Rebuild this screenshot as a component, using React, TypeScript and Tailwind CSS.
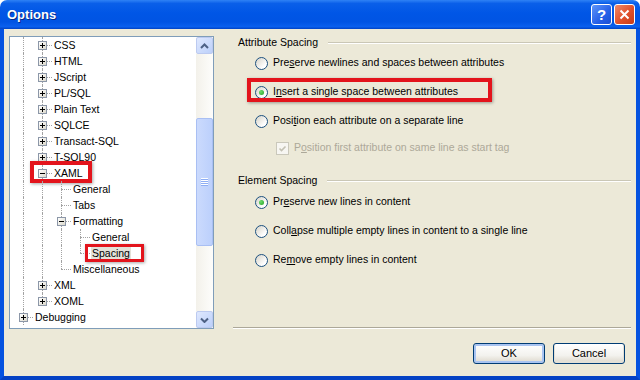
import React from 'react';

type TreeNode = {
  label: string;
  level: number;
  box?: '+' | '-';
  last?: boolean;
  mark?: 'xaml' | 'spacing';
};

const nodes: TreeNode[] = [
  { label: 'CSS', level: 1, box: '+' },
  { label: 'HTML', level: 1, box: '+' },
  { label: 'JScript', level: 1, box: '+' },
  { label: 'PL/SQL', level: 1, box: '+' },
  { label: 'Plain Text', level: 1, box: '+' },
  { label: 'SQLCE', level: 1, box: '+' },
  { label: 'Transact-SQL', level: 1, box: '+' },
  { label: 'T-SQL90', level: 1, box: '+' },
  { label: 'XAML', level: 1, box: '-', mark: 'xaml' },
  { label: 'General', level: 2 },
  { label: 'Tabs', level: 2 },
  { label: 'Formatting', level: 2, box: '-' },
  { label: 'General', level: 3 },
  { label: 'Spacing', level: 3, last: true, mark: 'spacing' },
  { label: 'Miscellaneous', level: 2, last: true },
  { label: 'XML', level: 1, box: '+' },
  { label: 'XOML', level: 1, box: '+', last: true },
  { label: 'Debugging', level: 0, box: '+' },
];

const dots = 'border-dotted border-[#a3a3a3]';

const ExpandBox = ({ sign }: { sign: '+' | '-' }) => (
  <div className="absolute left-[5px] top-[4px] flex h-[9px] w-[9px] items-center justify-center border border-[#8c97a8] bg-[linear-gradient(135deg,#ffffff,#dcd9cc)]">
    <svg width="7" height="7" viewBox="0 0 7 7" shapeRendering="crispEdges">
      <path d="M1 3.5h5" stroke="#000" strokeWidth="1" />
      {sign === '+' && <path d="M3.5 1v5" stroke="#000" strokeWidth="1" />}
    </svg>
  </div>
);

const TreeRow = ({ node }: { node: TreeNode }) => (
  <div className="relative flex h-[16px] items-center">
    {Array.from({ length: node.level }).map((_, i) => (
      <div key={i} className="relative h-full w-[19px] shrink-0">
        <div className={`absolute left-[9px] top-0 h-full border-l ${dots}`} />
      </div>
    ))}
    <div className="relative h-full w-[19px] shrink-0">
      <div className={`absolute left-[9px] top-0 h-[8px] border-l ${dots}`} />
      {!node.last && <div className={`absolute left-[9px] top-[8px] h-[8px] border-l ${dots}`} />}
      <div className={`absolute left-[9px] top-[8px] w-[10px] border-t ${dots}`} />
      {node.box && <ExpandBox sign={node.box} />}
    </div>
    <span
      className={`ml-[1px] whitespace-nowrap px-[1px] leading-[14px] ${
        node.mark === 'spacing' ? 'bg-[#e3e1d8]' : ''
      }`}
    >
      {node.label}
    </span>
    {node.mark === 'xaml' && (
      <div className="absolute left-[16px] top-[-4px] h-[22px] w-[62px] border-4 border-[#e3141c] shadow-[1px_1px_3px_rgba(0,0,0,0.35)]" />
    )}
    {node.mark === 'spacing' && (
      <div className="absolute left-[71px] top-[-1px] h-[18px] w-[59px] border-[3px] border-[#e3141c] shadow-[1px_1px_3px_rgba(0,0,0,0.35)]" />
    )}
  </div>
);

const Chevron = ({ down }: { down?: boolean }) => (
  <svg width="9" height="6" viewBox="0 0 9 6">
    <polyline
      points={down ? '1,1.5 4.5,5 8,1.5' : '1,5 4.5,1.5 8,5'}
      fill="none"
      stroke="#4d6185"
      strokeWidth="2"
    />
  </svg>
);

const ScrollButton = ({ down }: { down?: boolean }) => (
  <div className="flex h-[17px] w-[17px] items-center justify-center rounded-[2px] border border-[#bccaf0] bg-[linear-gradient(135deg,#dfe8fe,#bcd0fa)]">
    <Chevron down={down} />
  </div>
);

const Scrollbar = () => (
  <div className="flex w-[17px] shrink-0 flex-col bg-[#f7f6f1]">
    <ScrollButton />
    <div className="flex-1 bg-[linear-gradient(90deg,#f3f1ea,#fdfdfb)]">
      <div className="mt-[64px] flex h-[128px] items-center justify-center rounded-[2px] border border-[#a9bff3] bg-[linear-gradient(90deg,#cbdafd,#bcd0fc)]">
        <div className="flex flex-col">
          {[0, 1, 2, 3].map((i) => (
            <div key={i} className="h-[2px] w-[7px] border-t border-white border-b border-b-[#8eaef4]" />
          ))}
        </div>
      </div>
    </div>
    <ScrollButton down />
  </div>
);

const Radio = ({ checked }: { checked?: boolean }) => (
  <span className="flex h-[13px] w-[13px] shrink-0 items-center justify-center rounded-full border border-[#1c5180] bg-[linear-gradient(135deg,#d6d3c8,#ffffff_75%)]">
    {checked && <span className="h-[5px] w-[5px] rounded-full bg-[radial-gradient(circle_at_35%_35%,#6fdc6f,#21a121)]" />}
  </span>
);

const RadioRow = ({ checked, children, className = '' }: { checked?: boolean; children: React.ReactNode; className?: string }) => (
  <div className={`flex h-[16px] items-center pl-[22px] ${className}`}>
    <Radio checked={checked} />
    <span className="ml-[5px] whitespace-nowrap">{children}</span>
  </div>
);

const GroupHeader = ({ children, className = '' }: { children: React.ReactNode; className?: string }) => (
  <div className={`flex h-[14px] items-center ${className}`}>
    <span className="ml-[5px] whitespace-nowrap">{children}</span>
    <div className="ml-[10px] h-[2px] flex-1 border-t border-[#cac7b6] border-b border-b-white" />
  </div>
);

const DialogButton = ({ label, isDefault }: { label: string; isDefault?: boolean }) => (
  <button
    className={`flex h-[21px] w-[72px] items-center justify-center rounded-[3px] border border-[#003c74] bg-[linear-gradient(180deg,#ffffff,#f3f2ee_60%,#dcd7cb)] text-[11px] ${
      isDefault ? 'shadow-[inset_0_0_0_2px_#a9c4f1]' : 'shadow-[inset_0_-1px_0_1px_#e3e0d6]'
    }`}
  >
    {label}
  </button>
);

const TitleBar = () => (
  <div className="flex h-[29px] shrink-0 items-center rounded-t-[7px] bg-[linear-gradient(180deg,#2f82f5_0%,#0a5fe9_12%,#0056e6_45%,#0054e3_75%,#0a60ee_92%,#0042c4_100%)] pl-[7px] pr-[5px]">
    <span className="font-['Liberation_Sans',Arial,sans-serif] text-[13px] font-bold text-white [text-shadow:1px_1px_#0b2a84]">
      Options
    </span>
    <div className="ml-auto flex gap-[2px]">
      <div className="flex h-[21px] w-[21px] items-center justify-center rounded-[3px] border border-white bg-[linear-gradient(135deg,#5e95f9,#2560e8_60%,#1a4fd3)]">
        <span className="text-[15px] font-bold leading-none text-white">?</span>
      </div>
      <div className="flex h-[21px] w-[21px] items-center justify-center rounded-[3px] border border-white bg-[linear-gradient(135deg,#f08a6a,#e0502b_55%,#c63c18)]">
        <svg width="11" height="11" viewBox="0 0 11 11">
          <path d="M1.5 1.5l8 8M9.5 1.5l-8 8" stroke="#fff" strokeWidth="2" />
        </svg>
      </div>
    </div>
  </div>
);

export default function App() {
  return (
    <div className="flex h-[380px] w-[640px] flex-col overflow-hidden bg-white font-['Liberation_Sans',Arial,sans-serif] text-[10.5px] text-black">
      <TitleBar />
      <div className="flex min-h-0 flex-1 border-x-4 border-b-4 border-x-[#0552e0] border-b-[#0441c4] bg-[#ece9d8]">
        {/* tree */}
        <div className="ml-[5px] mt-[7px] flex h-[293px] w-[205px] shrink-0 border border-[#7f9db9] bg-white">
          <div className="min-w-0 flex-1 overflow-hidden pl-[4px]">
            {nodes.map((n, i) => (
              <TreeRow key={i} node={n} />
            ))}
          </div>
          <Scrollbar />
        </div>

        {/* settings */}
        <div className="ml-[19px] mr-[5px] flex min-w-0 flex-1 flex-col">
          <GroupHeader className="mt-[7px]">Attribute Spacing</GroupHeader>
          <RadioRow className="mt-[5px]">
            Pre<u>s</u>erve newlines and spaces between attributes
          </RadioRow>
          <div className="relative mt-[13px]">
            <RadioRow checked>
              I<u>n</u>sert a single space between attributes
            </RadioRow>
            <div className="absolute left-[14px] top-[-6px] h-[24px] w-[245px] border-4 border-[#e3141c] shadow-[1px_1px_3px_rgba(0,0,0,0.35)]" />
          </div>
          <RadioRow className="mt-[13px]">
            Posi<u>t</u>ion each attribute on a separate line
          </RadioRow>
          <div className="mt-[11px] flex h-[16px] items-center pl-[43px]">
            <span className="flex h-[13px] w-[13px] shrink-0 items-center justify-center border border-[#cac8bb] bg-[#f7f6f2]">
              <svg width="9" height="9" viewBox="0 0 9 9">
                <polyline points="1.5,4.5 3.5,6.5 7.5,2.5" fill="none" stroke="#c3c1b3" strokeWidth="1.6" />
              </svg>
            </span>
            <span className="ml-[5px] whitespace-nowrap text-[#aca899]">
              P<u>o</u>sition first attribute on same line as start tag
            </span>
          </div>

          <GroupHeader className="mt-[18px]">Element Spacing</GroupHeader>
          <RadioRow checked className="mt-[6px]">
            Pr<u>e</u>serve new lines in content
          </RadioRow>
          <RadioRow className="mt-[13px]">
            Coll<u>a</u>pse multiple empty lines in content to a single line
          </RadioRow>
          <RadioRow className="mt-[13px]">
            Re<u>m</u>ove empty lines in content
          </RadioRow>

          <div className="mt-auto h-[2px] border-t border-[#aca899] border-b border-b-white" />
          <div className="mb-[12px] mt-[14px] flex justify-end gap-[8px] pr-[6px]">
            <DialogButton label="OK" isDefault />
            <DialogButton label="Cancel" />
          </div>
        </div>
      </div>
    </div>
  );
}
